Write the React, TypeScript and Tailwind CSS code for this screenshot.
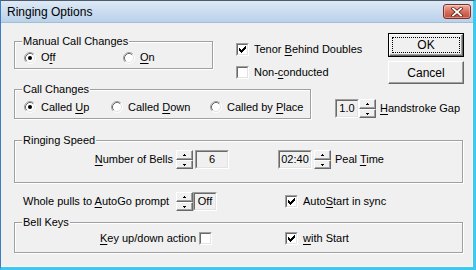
import React from 'react';

function U({ children }: { children: React.ReactNode }) {
  return <span className="underline decoration-1 underline-offset-[2px]">{children}</span>;
}

function Radio({ checked }: { checked?: boolean }) {
  return (
    <svg width="12" height="12" viewBox="0 0 12 12" className="shrink-0">
      <circle cx="6" cy="6" r="5" fill="#fff" />
      <path d="M2.11 9.89A5.5 5.5 0 0 1 9.89 2.11" fill="none" stroke="#a0a0a0" />
      <path d="M9.89 2.11A5.5 5.5 0 0 1 2.11 9.89" fill="none" stroke="#fff" />
      <path d="M2.82 9.18A4.5 4.5 0 0 1 9.18 2.82" fill="none" stroke="#696969" />
      <path d="M9.18 2.82A4.5 4.5 0 0 1 2.82 9.18" fill="none" stroke="#e3e3e3" />
      {checked && <circle cx="6" cy="6" r="2" fill="#000" />}
    </svg>
  );
}

function Check({ checked }: { checked?: boolean }) {
  return (
    <div className="w-[13px] h-[13px] shrink-0 border border-t-[#a0a0a0] border-l-[#a0a0a0] border-r-white border-b-white">
      <div className="w-full h-full bg-white border border-t-[#696969] border-l-[#696969] border-r-[#e3e3e3] border-b-[#e3e3e3] p-[1px]">
        {checked && (
          <svg width="7" height="7" viewBox="0 0 7 7" shapeRendering="crispEdges">
            <path d="M0 2h1v3H0zM1 3h1v3H1zM2 4h1v3H2zM3 3h1v3H3zM4 2h1v3H4zM5 1h1v3H5zM6 0h1v3H6z" fill="#000" />
          </svg>
        )}
      </div>
    </div>
  );
}

function SpinBtn({ up, className }: { up?: boolean; className: string }) {
  return (
    <div className={`bg-[#f0f0f0] border border-t-white border-l-white border-r-[#696969] border-b-[#696969] shadow-[inset_-1px_-1px_0_#a0a0a0] flex items-center justify-center ${className}`}>
      <svg width="3" height="2" viewBox="0 0 3 2" shapeRendering="crispEdges">
        <path d={up ? 'M1 0h1v1H1zM0 1h3v1H0z' : 'M0 0h3v1H0zM1 1h1v1H1z'} fill="#000" />
      </svg>
    </div>
  );
}

function Spin() {
  return (
    <div className="flex flex-col w-[17px] h-[19px] shrink-0">
      <SpinBtn up className="h-[10px]" />
      <SpinBtn className="h-[9px]" />
    </div>
  );
}

function Edit({ className, children }: { className: string; children: React.ReactNode }) {
  return (
    <div className={`h-[19px] shrink-0 border border-t-[#a0a0a0] border-l-[#a0a0a0] border-r-white border-b-white ${className}`}>
      <div className="h-full bg-[#f0f0f0] border border-t-[#696969] border-l-[#696969] border-r-[#e3e3e3] border-b-[#e3e3e3] flex items-center justify-center leading-none">
        {children}
      </div>
    </div>
  );
}

function Group({ label, className, children }: { label: string; className: string; children: React.ReactNode }) {
  return (
    <fieldset className={`border border-[#a0a0a0] shadow-[inset_1px_1px_0_#fff,1px_1px_0_#fff] ${className}`}>
      <legend className="ml-[7px] px-[1px] h-[13px] leading-[13px] bg-[#f0f0f0]">{label}</legend>
      {children}
    </fieldset>
  );
}

export default function App() {
  return (
    <div className="w-[476px] h-[270px] flex flex-col bg-[#f0f0f0] border-t border-l border-t-[#4f5b69] border-l-[#3c7cc4] border-r-[3px] border-b-[3px] border-r-[#3cc8f0] border-b-[#3cc8f0] text-[11px] text-black font-['Liberation_Sans',Arial,sans-serif] overflow-hidden">
      <div className="h-[22px] shrink-0 flex items-center bg-linear-to-b from-[#dde9f6] to-[#b9d1ea] border-b border-[#a3bcd8] pl-[6px] pr-[2px]">
        <span className="text-[12px]">Ringing Options</span>
        <div className="ml-auto w-[28px] h-[15px] rounded-[3px] border border-[#7a3024] bg-linear-to-b from-[#ecb1a4] via-[#d7705d] to-[#c24a36] shadow-[inset_0_0_0_1px_rgba(255,255,255,0.35)] flex items-center justify-center">
          <svg width="12" height="10" viewBox="0 0 12 10">
            <path d="M2 1.5l8 7M10 1.5l-8 7" stroke="#5b1f16" strokeWidth="3.4" strokeLinecap="square" />
            <path d="M2 1.5l8 7M10 1.5l-8 7" stroke="#fff" strokeWidth="1.8" strokeLinecap="square" />
          </svg>
        </div>
      </div>

      <div className="flex-1 pl-[13px] pt-[12px] pr-[9px] shadow-[inset_-1px_-1px_0_#fff]">
        <div className="flex items-start h-[48px]">
          <Group label="Manual Call Changes" className="w-[199px]">
            <div className="flex items-center h-[20px] pl-[9px] pb-[1px]">
              <div className="flex items-center gap-[5px] w-[99px]">
                <Radio checked />
                <span>O<U>f</U>f</span>
              </div>
              <div className="flex items-center gap-[5px]">
                <Radio />
                <span><U>O</U>n</span>
              </div>
            </div>
          </Group>

          <div className="flex flex-col ml-[23px]">
            <div className="flex items-center gap-[5px] h-[16px] mt-[6px]">
              <Check checked />
              <span>Tenor <U>B</U>ehind Doubles</span>
            </div>
            <div className="flex items-center gap-[5px] h-[16px] mt-[7px]">
              <Check />
              <span>Non-<U>c</U>onducted</span>
            </div>
          </div>

          <div className="ml-auto mt-[-2px] flex flex-col w-[76px]">
            <div className="h-[24px] border border-black">
              <div className="h-full border border-t-white border-l-white border-r-[#696969] border-b-[#696969] shadow-[inset_-1px_-1px_0_#a0a0a0] p-[2px]">
                <div className="h-full border border-dotted border-black flex items-center justify-center text-[12px]">OK</div>
              </div>
            </div>
            <div className="h-[23px] mt-[4px] border border-t-white border-l-white border-r-[#696969] border-b-[#696969] shadow-[inset_-1px_-1px_0_#a0a0a0] flex items-center justify-center text-[12px]">
              Cancel
            </div>
          </div>
        </div>

        <div className="flex items-start">
          <Group label="Call Changes" className="w-[297px]">
            <div className="flex items-center h-[22px] pl-[9px]">
              <div className="flex items-center gap-[5px] w-[87px]">
                <Radio checked />
                <span>Called <U>U</U>p</span>
              </div>
              <div className="flex items-center gap-[5px] w-[99px]">
                <Radio />
                <span>Called <U>D</U>own</span>
              </div>
              <div className="flex items-center gap-[5px]">
                <Radio />
                <span>Called by <U>P</U>lace</span>
              </div>
            </div>
          </Group>
          <div className="flex items-center ml-[24px] mt-[16px]">
            <Edit className="w-[24px]">1.0</Edit>
            <Spin />
            <span className="ml-[4px]"><U>H</U>andstroke Gap</span>
          </div>
        </div>

        <Group label="Ringing Speed" className="w-[449px] mt-[15px]">
          <div className="flex items-center h-[35px] pb-[13px] pt-[3px]">
            <span className="w-[158px] text-right"><U>N</U>umber of Bells</span>
            <div className="ml-[3px]"><Spin /></div>
            <Edit className="w-[34px] ml-[2px]">6</Edit>
            <Edit className="w-[34px] ml-[49px]">02:40</Edit>
            <div className="ml-[2px]"><Spin /></div>
            <span className="ml-[4px]">Peal <U>T</U>ime</span>
          </div>
        </Group>

        <div className="flex items-center h-[19px] mt-[9px] pl-[9px]">
          <span className="w-[153px]">Whole pulls to <U>A</U>utoGo prompt</span>
          <Spin />
          <Edit className="w-[24px]">Off</Edit>
          <div className="ml-[68px]"><Check checked /></div>
          <span className="ml-[5px]">Auto<U>S</U>tart in sync</span>
        </div>

        <Group label="Bell Keys" className="w-[449px] mt-[5px]">
          <div className="flex items-center h-[16px] mt-[1px] mb-[6px]">
            <span className="w-[181px] text-right"><U>K</U>ey up/down action</span>
            <div className="ml-[3px]"><Check /></div>
            <div className="ml-[73px]"><Check checked /></div>
            <span className="ml-[5px]"><U>w</U>ith Start</span>
          </div>
        </Group>
      </div>
    </div>
  );
}
